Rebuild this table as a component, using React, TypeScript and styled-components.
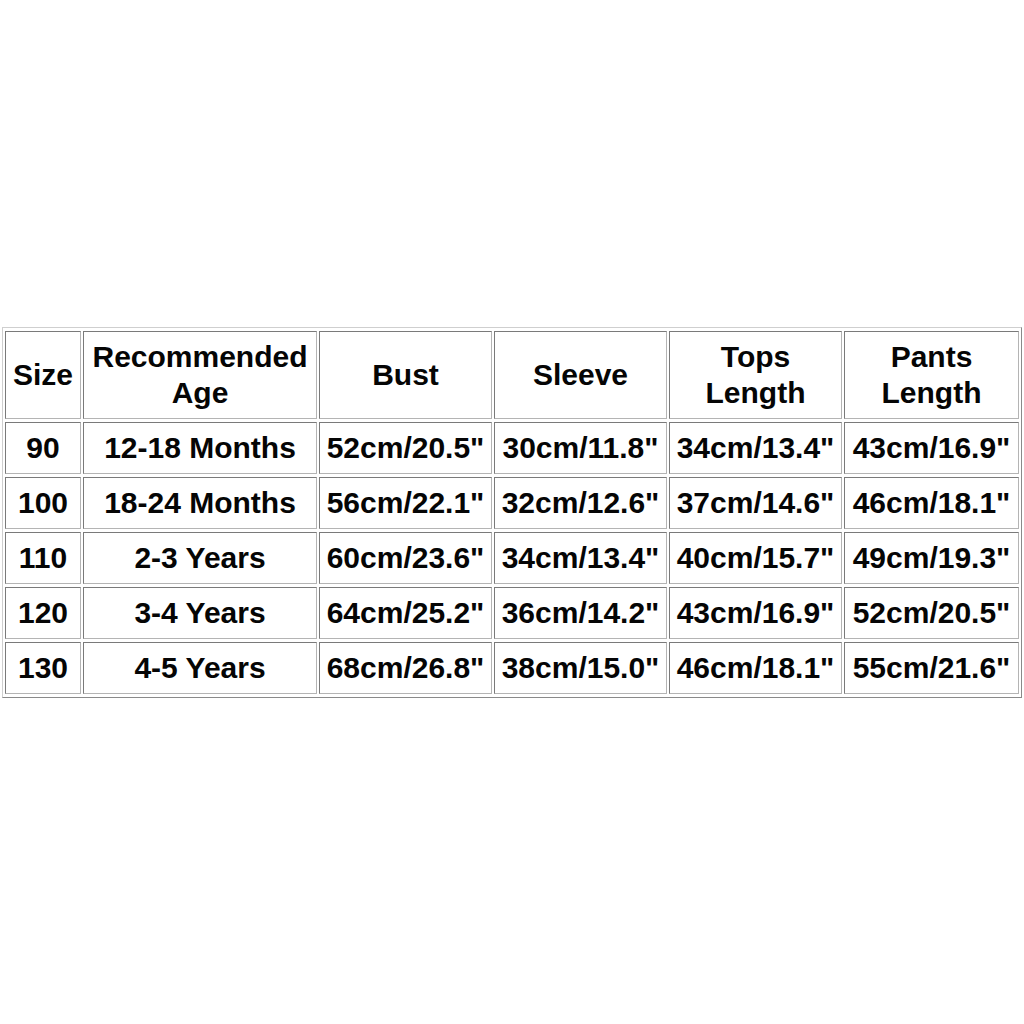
import React from "react";
import styled, { createGlobalStyle } from "styled-components";

const GlobalStyle = createGlobalStyle`
  html, body {
    margin: 0;
    padding: 0;
    background: #ffffff;
  }
  body {
    font-family: "Liberation Sans", Arial, sans-serif;
  }
`;

const Page = styled.div`
  width: 1024px;
  height: 1024px;
  display: flex;
  align-items: center;
  justify-content: center;
  background: #ffffff;
`;

const Table = styled.table`
  width: 1020px;
  table-layout: fixed;
  border-collapse: separate;
  border-spacing: 2px 3px;
  border-style: solid;
  border-width: 1px;
  border-color: #cfcfcf #8a8a8a #8a8a8a #cfcfcf;
  font-family: "Liberation Sans", Arial, sans-serif;
  font-weight: 700;
  font-size: 30px;
  color: #050505;
`;

const Col = styled.col<{ $w: number }>`
  width: ${(p) => p.$w}px;
`;

const HeadRow = styled.tr`
  height: 88px;
`;

const BodyRow = styled.tr`
  height: 52px;
`;

const Cell = styled.td`
  box-sizing: border-box;
  padding: 0 2px;
  text-align: center;
  vertical-align: middle;
  line-height: 36px;
  white-space: nowrap;
  border-style: solid;
  border-width: 1px;
  border-color: #7a7a7a #b4b4b4 #b4b4b4 #7a7a7a;
`;

const HeadCell = styled(Cell).attrs({ as: "th" })`
  font-weight: 700;
`;

const widths = [76, 234, 173, 173, 173, 175];

const headers: React.ReactNode[] = [
  "Size",
  <>Recommended<br />Age</>,
  "Bust",
  "Sleeve",
  <>Tops<br />Length</>,
  <>Pants<br />Length</>,
];

const rows = [
  ["90", "12-18 Months", '52cm/20.5"', '30cm/11.8"', '34cm/13.4"', '43cm/16.9"'],
  ["100", "18-24 Months", '56cm/22.1"', '32cm/12.6"', '37cm/14.6"', '46cm/18.1"'],
  ["110", "2-3 Years", '60cm/23.6"', '34cm/13.4"', '40cm/15.7"', '49cm/19.3"'],
  ["120", "3-4 Years", '64cm/25.2"', '36cm/14.2"', '43cm/16.9"', '52cm/20.5"'],
  ["130", "4-5 Years", '68cm/26.8"', '38cm/15.0"', '46cm/18.1"', '55cm/21.6"'],
];

export default function App() {
  return (
    <>
      <GlobalStyle />
      <Page>
        <Table>
          <colgroup>
            {widths.map((w, i) => (
              <Col key={i} $w={w} />
            ))}
          </colgroup>
          <thead>
            <HeadRow>
              {headers.map((h, i) => (
                <HeadCell key={i}>{h}</HeadCell>
              ))}
            </HeadRow>
          </thead>
          <tbody>
            {rows.map((r, i) => (
              <BodyRow key={i}>
                {r.map((c, j) => (
                  <Cell key={j}>{c}</Cell>
                ))}
              </BodyRow>
            ))}
          </tbody>
        </Table>
      </Page>
    </>
  );
}
